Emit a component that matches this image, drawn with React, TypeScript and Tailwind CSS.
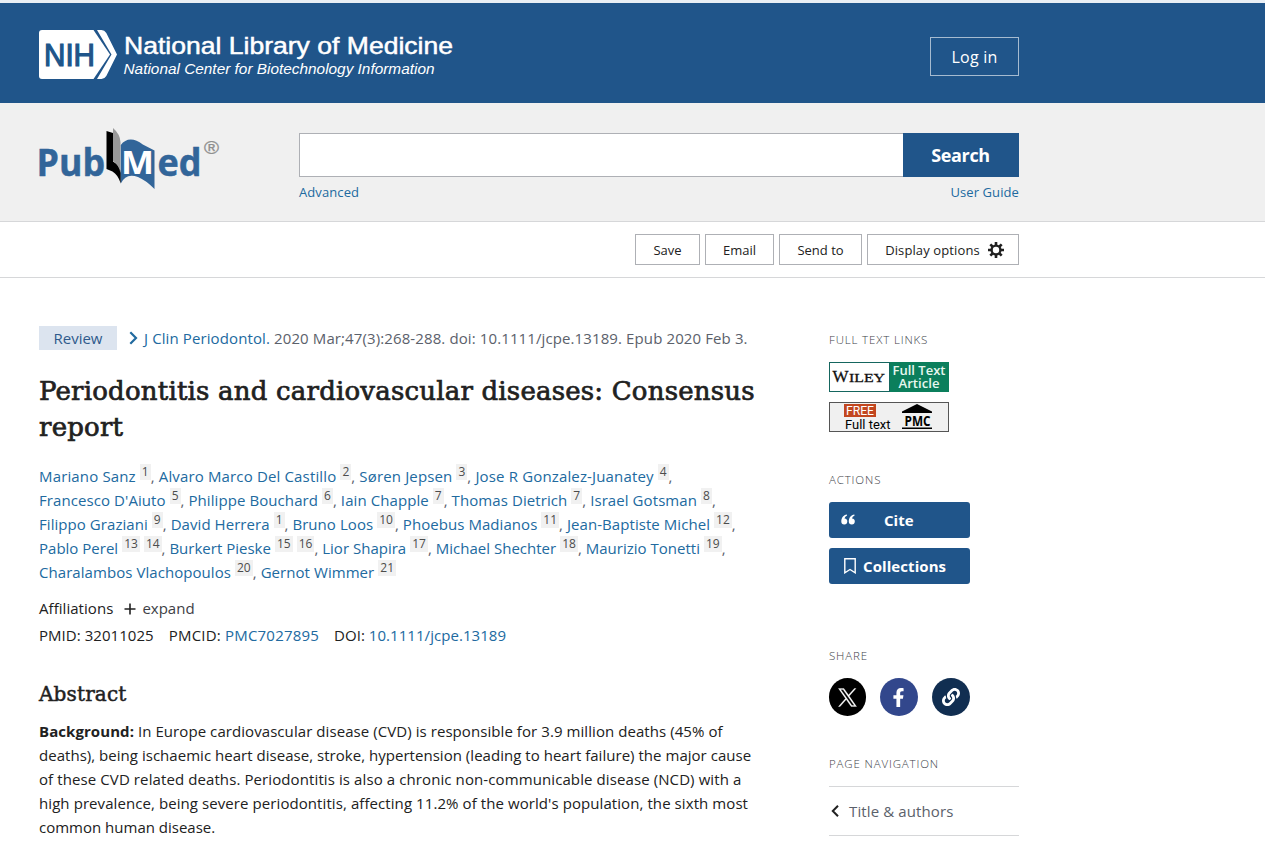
import React from 'react';
import clsx from 'clsx';
import { FaFacebookF, FaLink } from 'react-icons/fa';

interface Author {
  name: string;
  refs: number[];
}

interface AuthorRow {
  tracking: string;
  authors: Author[];
}

const AUTHOR_ROWS: AuthorRow[] = [
  {
    tracking: 'tracking-[0.15px]',
    authors: [
      { name: 'Mariano Sanz', refs: [1] },
      { name: 'Alvaro Marco Del Castillo', refs: [2] },
      { name: 'Søren Jepsen', refs: [3] },
      { name: 'Jose R Gonzalez-Juanatey', refs: [4] },
    ],
  },
  {
    tracking: 'tracking-[0.08px]',
    authors: [
      { name: "Francesco D'Aiuto", refs: [5] },
      { name: 'Philippe Bouchard', refs: [6] },
      { name: 'Iain Chapple', refs: [7] },
      { name: 'Thomas Dietrich', refs: [7] },
      { name: 'Israel Gotsman', refs: [8] },
    ],
  },
  {
    tracking: 'tracking-[0.06px]',
    authors: [
      { name: 'Filippo Graziani', refs: [9] },
      { name: 'David Herrera', refs: [1] },
      { name: 'Bruno Loos', refs: [10] },
      { name: 'Phoebus Madianos', refs: [11] },
      { name: 'Jean-Baptiste Michel', refs: [12] },
    ],
  },
  {
    tracking: 'tracking-[0.01px]',
    authors: [
      { name: 'Pablo Perel', refs: [13, 14] },
      { name: 'Burkert Pieske', refs: [15, 16] },
      { name: 'Lior Shapira', refs: [17] },
      { name: 'Michael Shechter', refs: [18] },
      { name: 'Maurizio Tonetti', refs: [19] },
    ],
  },
  {
    tracking: 'tracking-[0.06px]',
    authors: [
      { name: 'Charalambos Vlachopoulos', refs: [20] },
      { name: 'Gernot Wimmer', refs: [21] },
    ],
  },
];

const NihLogo = () => (
  <svg width="420" height="54" viewBox="0 0 420 54" className="block">
    <path d="M3 1h51.500l16.500 24.500-16.500 24.500H3a3 3 0 0 1-3-3V4a3 3 0 0 1 3-3z" fill="#fff" />
    <path d="M58 1h4.500q3 0 4.800 3l10.700 21.500-10.700 21.500q-1.800 3-4.800 3H58l14.500-24.500z" fill="#fff" />
    <text x="5" y="36.500" textLength="51" lengthAdjust="spacingAndGlyphs" fontFamily="'Liberation Sans', sans-serif" fontSize="31.500" fill="#20558a" stroke="#20558a" strokeWidth="1.200">NIH</text>
    <text x="85" y="25" textLength="329" lengthAdjust="spacingAndGlyphs" fontFamily="'Liberation Sans', sans-serif" fontSize="24.500" fill="#fff" stroke="#fff" strokeWidth="0.500">National Library of Medicine</text>
    <text x="84.500" y="45" textLength="311" lengthAdjust="spacingAndGlyphs" fontFamily="'Liberation Sans', sans-serif" fontStyle="italic" fontSize="14.500" fill="#fff">National Center for Biotechnology Information</text>
  </svg>
);

const PubMedLogo = () => (
  <svg width="190" height="64" viewBox="-6 0 190 64" className="-ml-[6px] block">
    <g fontFamily="'Open Sans', sans-serif" fontWeight="700" fill="#326599">
      <text x="-2.500" y="48.700" textLength="68.500" lengthAdjust="spacingAndGlyphs" fontSize="38" stroke="#326599" strokeWidth="0.500">Pub</text>
      <text x="118.500" y="48.700" textLength="44" lengthAdjust="spacingAndGlyphs" fontSize="38" stroke="#326599" strokeWidth="0.500">ed</text>
    </g>
    <path d="M67.500 4 74 6v28.500q7 4 7.800 11v11q-3-9-8.300-12l-6-2.500z" fill="#000" />
    <path d="M74 1q7 6 7.500 14v31q-1.500-8-7.500-12z" fill="#999" />
    <path d="M81.800 56.500V18q4-5.500 10-5.500 5.500 0 12 5l11.700 6v38.500q-9-9-16.500-12-12-4.500-17.200 6.500z" fill="#326599" />
    <text x="82" y="46.500" textLength="33" lengthAdjust="spacingAndGlyphs" fontFamily="'Open Sans', sans-serif" fontWeight="700" fontSize="33" fill="#fff">M</text>
    <text x="165" y="27" textLength="15" lengthAdjust="spacingAndGlyphs" fontFamily="'Liberation Sans', sans-serif" fontSize="19" fill="#8f8f8f" stroke="#8f8f8f" strokeWidth="0.300">®</text>
  </svg>
);

const GearIcon = () => (
  <svg width="16" height="16" viewBox="0 0 16 16" className="-mt-px block">
    <g stroke="#212121" strokeWidth="2.600">
      <path d="M8 0v3M8 13v3M0 8h3M13 8h3M2.300 2.300l2.200 2.200M11.500 11.500l2.200 2.200M2.300 13.700l2.200-2.200M11.500 4.500l2.200-2.200" />
      <circle cx="8" cy="8" r="4.400" fill="none" strokeWidth="2.400" />
    </g>
  </svg>
);

const QuoteIcon = () => (
  <svg width="14" height="12" viewBox="0 0 14 12" fill="#fff" className="block">
    <path d="M5.800 0.500C2.500 1 0.300 3.800 0.300 7.500a3 3 0 1 0 3.200-3q0.300-2 2.600-2.900z" />
    <path d="M13.300 0.500C10 1 7.800 3.800 7.800 7.500a3 3 0 1 0 3.200-3q0.300-2 2.600-2.900z" />
  </svg>
);

const XIcon = () => (
  <svg width="19" height="19" viewBox="0 0 24 24" fill="#fff" stroke="#fff" strokeWidth="0.400" className="block">
    <path d="M14.200 10.200 22.700 0.500h-2l-7.400 8.400-5.900-8.400H0.600l8.900 12.800L0.600 23.500h2l7.800-9 6.200 9h6.800zM11.400 13.300l-0.900-1.300L3.300 2h3.100l5.800 8.200 0.900 1.300 7.600 10.600h-3.100z" />
  </svg>
);

const WileyBadge = () => (
  <svg width="120" height="30" viewBox="0 0 120 30" className="block">
    <rect width="120" height="30" fill="#15665f" />
    <rect x="61" width="59" height="30" fill="#0b7f5c" />
    <rect x="1" y="1" width="59" height="28" fill="#fff" />
    <g fontFamily="'Liberation Serif', serif" fill="#111" stroke="#111" strokeWidth="0.300">
      <text x="3.500" y="20" fontSize="17" textLength="16" lengthAdjust="spacingAndGlyphs">W</text>
      <text x="20" y="20" fontSize="13.500" textLength="36" lengthAdjust="spacingAndGlyphs">ILEY</text>
    </g>
    <g fontFamily="'Open Sans', sans-serif" fontSize="12" fontWeight="600" fill="#e6f7ef">
      <text x="63.500" y="12.700" textLength="53" lengthAdjust="spacingAndGlyphs">Full Text</text>
      <text x="69.500" y="26" textLength="41" lengthAdjust="spacingAndGlyphs">Article</text>
    </g>
  </svg>
);

const PmcBadge = () => (
  <svg width="120" height="30" viewBox="0 0 120 30" className="block">
    <rect x="0.500" y="0.500" width="119" height="29" fill="#f0f0f0" stroke="#555" />
    <rect x="15" y="2" width="32" height="13" fill="#c2461f" />
    <g fontFamily="Roboto, sans-serif">
      <text x="17" y="13" fontSize="12" textLength="28" lengthAdjust="spacingAndGlyphs" fill="#fff">FREE</text>
      <text x="16" y="27" fontSize="13" textLength="45.500" lengthAdjust="spacingAndGlyphs" fill="#000">Full text</text>
    </g>
    <path d="M88 2 103 9.500v1.500H73V9.500zM73 25.500h30v1.500H73z" fill="#000" />
    <text x="75.500" y="23.500" fontFamily="'Open Sans', sans-serif" fontWeight="700" fontSize="13.500" textLength="26" lengthAdjust="spacingAndGlyphs" fill="#000">PMC</text>
  </svg>
);

const ToolButton: React.FC<{ className: string; children: React.ReactNode }> = ({ className, children }) => (
  <button className={clsx('h-[31px] border border-[#aeb0b5] bg-white pt-[2px] text-[13px] text-[#212121] flex items-center justify-center', className)}>
    {children}
  </button>
);

const SideTitle: React.FC<{ children: React.ReactNode }> = ({ children }) => (
  <h3 className="text-[11.5px] leading-4 font-light uppercase text-[#3d4248] tracking-[0.85px] whitespace-nowrap">{children}</h3>
);

const AuthorLine: React.FC<{ row: AuthorRow }> = ({ row }) => (
  <div className={clsx('h-6 leading-6 whitespace-nowrap', row.tracking)}>
    {row.authors.map((author, i) => (
      <React.Fragment key={author.name}>
        <a className="text-[#216a9f]">{author.name}</a>
        {author.refs.map(ref => (
          <sup key={ref} className="ml-1 inline-block h-4 bg-[#f1f1f1] px-[2px] text-[12px] leading-4 text-[#4c4c4c] tracking-normal align-baseline">
            {ref}
          </sup>
        ))}
        {author.refs[0] !== 21 && <span className="text-[#5b616b]">{i < row.authors.length - 1 ? ', ' : ','}</span>}
      </React.Fragment>
    ))}
  </div>
);

export default function App() {
  return (
    <div className="h-[844px] w-full overflow-hidden bg-white font-['Open_Sans',sans-serif] text-[15px] text-[#212121]">
      <div className="h-[3px] bg-[#e9eff5]" />
      <header className="h-[100px] bg-[#20558a]">
        <div className="ml-[39px] w-[980px] h-full flex justify-between">
          <div className="pt-[26px]">
            <NihLogo />
          </div>
          <button className="mt-[34px] h-[39px] w-[89px] border border-[#a6bbd0] text-white text-base tracking-[0.2px]">Log in</button>
        </div>
      </header>

      <section className="h-[119px] bg-[#f0f0f0] border-b border-[#d6d7d9]">
        <div className="ml-[39px] w-[980px] flex">
          <div className="w-[260px] pt-6">
            <PubMedLogo />
          </div>
          <div className="flex-1 pt-[30px]">
            <div className="flex h-11">
              <input className="flex-1 min-w-0 bg-white border border-r-0 border-[#aeb0b5] outline-none" />
              <button className="w-[116px] bg-[#20558a] pr-px pt-px text-white font-bold text-[18px] tracking-[-0.35px]">Search</button>
            </div>
            <div className="mt-[5px] flex justify-between text-[13px] leading-5 tracking-[0.1px] text-[#216a9f]">
              <a>Advanced</a>
              <a>User Guide</a>
            </div>
          </div>
        </div>
      </section>

      <section className="h-14 border-b border-[#d6d7d9]">
        <div className="ml-[39px] w-[980px] pt-3 flex justify-end gap-[5px]">
          <ToolButton className="w-[65px]">Save</ToolButton>
          <ToolButton className="w-[69px]">Email</ToolButton>
          <ToolButton className="w-[83px]">Send to</ToolButton>
          <ToolButton className="w-[152px] gap-2 pl-[3px]">
            <span className="tracking-[0.12px]">Display options</span>
            <GearIcon />
          </ToolButton>
        </div>
      </section>

      <div className="ml-[39px] w-[980px] flex justify-between">
        <main className="w-[730px] pt-12">
          <div className="flex h-6 items-center whitespace-nowrap text-[#5b616b]">
            <span className="h-6 w-[78px] bg-[#dce4ef] text-center leading-6 text-[#2e5a8c]">Review</span>
            <svg width="9" height="14" viewBox="0 0 9 14" className="ml-3 mr-[6px]" fill="none" stroke="#216a9f" strokeWidth="2.200">
              <path d="M1.300 1.200 7 7l-5.700 5.800" />
            </svg>
            <span className="tracking-[0.11px]">
              <a className="text-[#216a9f]">J Clin Periodontol.</a> 2020 Mar;47(3):268-288. doi: 10.1111/jcpe.13189. Epub 2020 Feb 3.
            </span>
          </div>

          <h1 className="mt-[23px] font-['DejaVu_Serif',serif] font-normal text-[26px] leading-9 whitespace-nowrap tracking-[0.2px] [-webkit-text-stroke:0.7px_#212121]">
            <span className="block">Periodontitis and cardiovascular diseases: Consensus</span>
            <span className="block">report</span>
          </h1>

          <div className="mt-[19px]">
            {AUTHOR_ROWS.map(row => (
              <AuthorLine key={row.authors[0].name} row={row} />
            ))}
          </div>

          <div className="mt-3 flex h-6 items-center leading-6">
            <span className="tracking-[0.05px]">Affiliations</span>
            <svg width="12" height="12" viewBox="0 0 12 12" className="mt-[2px] ml-[11px] mr-[6px]" stroke="#212121" strokeWidth="1.600">
              <path d="M6 0.500v11M0.500 6h11" />
            </svg>
            <span className="text-[#3d4045]">expand</span>
          </div>
          <div className="mt-[3px] flex h-6 leading-6 gap-[15px] whitespace-nowrap">
            <span className="tracking-[0.05px]">PMID: 32011025</span>
            <span className="tracking-[0.2px]">PMCID: <a className="text-[#216a9f]">PMC7027895</a></span>
            <span className="tracking-[0.05px]">DOI: <a className="text-[#216a9f]">10.1111/jcpe.13189</a></span>
          </div>

          <h2 className="mt-[33px] font-['DejaVu_Serif',serif] font-normal text-[20px] leading-7 tracking-[0.15px] [-webkit-text-stroke:0.5px_#212121]">Abstract</h2>
          <p className="mt-[11px] leading-6 whitespace-nowrap">
            <span className="block tracking-[0.07px]"><b>Background:</b> In Europe cardiovascular disease (CVD) is responsible for 3.9 million deaths (45% of</span>
            <span className="block tracking-[0.03px]">deaths), being ischaemic heart disease, stroke, hypertension (leading to heart failure) the major cause</span>
            <span className="block tracking-[0.1px]">of these CVD related deaths. Periodontitis is also a chronic non-communicable disease (NCD) with a</span>
            <span className="block tracking-[0.08px]">high prevalence, being severe periodontitis, affecting 11.2% of the world's population, the sixth most</span>
            <span className="block tracking-[0px]">common human disease.</span>
          </p>
        </main>

        <aside className="w-[190px] pt-[54px]">
          <SideTitle>Full text links</SideTitle>
          <div className="mt-[14px] flex flex-col gap-[10px]">
            <WileyBadge />
            <PmcBadge />
          </div>

          <div className="mt-10">
            <SideTitle>Actions</SideTitle>
          </div>
          <div className="mt-[14px] flex w-[141px] flex-col gap-[10px] text-white font-bold">
            <button className="flex h-9 items-center rounded-[3px] bg-[#20558a] pl-3">
              <QuoteIcon />
              <span className="ml-[29px]">Cite</span>
            </button>
            <button className="flex h-9 items-center rounded-[3px] bg-[#20558a] pl-[15px]">
              <svg width="12" height="16" viewBox="0 0 12 16" fill="none" stroke="#fff" strokeWidth="1.400" className="block">
                <path d="M0.800 0.800h10.400v14L6 11.500 0.800 14.800z" />
              </svg>
              <span className="ml-[7px] tracking-[0.08px]">Collections</span>
            </button>
          </div>

          <div className="mt-16">
            <SideTitle>Share</SideTitle>
          </div>
          <div className="mt-[14px] flex gap-[14px]">
            <span className="flex h-[38px] w-[37px] items-center justify-center rounded-full bg-black"><XIcon /></span>
            <span className="flex size-[38px] items-center justify-center rounded-full bg-[#32478c] pr-px"><FaFacebookF size={19} color="#fff" /></span>
            <span className="flex size-[38px] items-center justify-center rounded-full bg-[#112e51]"><FaLink size={18} color="#fff" /></span>
          </div>

          <div className="mt-10">
            <SideTitle>Page navigation</SideTitle>
          </div>
          <div className="mt-[14px] flex h-[50px] items-center border-y border-[#d6d7d9] text-[#5b616b]">
            <svg width="8" height="12" viewBox="0 0 8 12" className="ml-[2px] mr-[10px]" fill="none" stroke="#212121" strokeWidth="2">
              <path d="M7 0.800 1.800 6 7 11.200" />
            </svg>
            <span className="tracking-[0.12px]">Title &amp; authors</span>
          </div>
        </aside>
      </div>
    </div>
  );
}
